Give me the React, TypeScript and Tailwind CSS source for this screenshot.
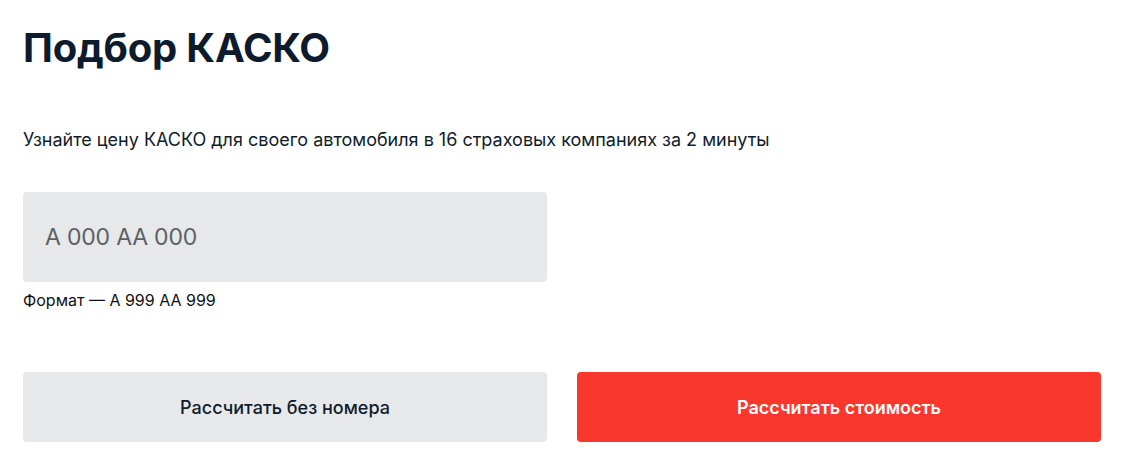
import React from "react";

export default function App() {
  return (
    <div className="w-[1122px] h-[463px] bg-white pl-[23px] pr-[21px] pt-[24px] font-['Inter','Noto_Sans',sans-serif] text-[#0f1c2b]">
      <h1 className="text-[40px] leading-[48px] font-bold tracking-[-0.2px] text-[#0d1b2c]">Подбор КАСКО</h1>
      <p className="mt-[55px] text-[18px] leading-[26px] text-[#101c2a]">
        Узнайте цену КАСКО для своего автомобиля в 16 страховых компаниях за 2 минуты
      </p>
      <div className="mt-[39px] grid grid-cols-2 gap-x-[30px]">
        <div>
          <div className="h-[90px] rounded-[4px] bg-[#e7e8ea] flex items-center pl-[22px]">
            <span className="text-[23px] tracking-[-0.2px] text-[#5c6066]">А 000 АА 000</span>
          </div>
          <div className="mt-[8px] text-[16px] leading-[20px] text-[#111]">Формат — А 999 АА 999</div>
        </div>
        <div />
      </div>
      <div className="mt-[62px] grid grid-cols-2 gap-x-[30px]">
        <button className="h-[70px] rounded-[4px] bg-[#e7e8ea] text-[18px] font-medium text-[#0f1c2b]">Рассчитать без номера</button>
        <button className="h-[70px] rounded-[4px] bg-[#f9372d] text-[18px] font-semibold text-white">Рассчитать стоимость</button>
      </div>
    </div>
  );
}
